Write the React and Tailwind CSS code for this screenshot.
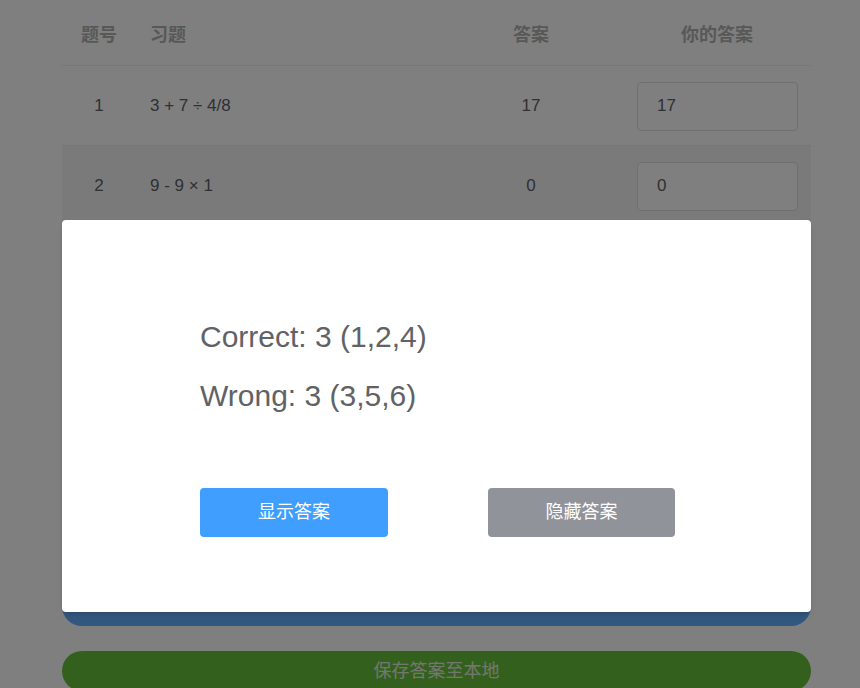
import React, { useState } from 'react';

const rows = [
  { id: 1, q: '3 + 7 ÷ 4/8', a: '17', mine: '17' },
  { id: 2, q: '9 - 9 × 1', a: '0', mine: '0' },
  { id: 3, q: '5 × 6 - 8', a: '22', mine: '20' },
  { id: 4, q: '12 ÷ 3 + 2', a: '6', mine: '6' },
  { id: 5, q: '7 + 8 × 2', a: '23', mine: '30' },
  { id: 6, q: '4 × 4 - 1', a: '15', mine: '14' },
];

const font = { fontFamily: '"Liberation Sans", Arial, "Noto Sans CJK SC", sans-serif' };

const App = () => {
  const [answers, setAnswers] = useState(rows.map((r) => r.mine));
  const [showModal, setShowModal] = useState(true);

  return (
    <div className="relative min-h-[688px] bg-white overflow-hidden" style={font}>
      <div className="ml-[62px] w-[749px]">
        <div className="grid grid-cols-[74px_303px_184px_188px] h-[66px] pt-[6px] items-center border-b border-[#ebeef5] text-[18px] font-bold text-[#b0b0b0]">
          <div className="text-center">题号</div>
          <div className="pl-[14px]">习题</div>
          <div className="text-center">答案</div>
          <div className="text-center">你的答案</div>
        </div>

        {rows.map((r, i) => (
          <div
            key={r.id}
            className={`grid grid-cols-[74px_303px_184px_188px] h-[80px] items-center border-b border-[#ebeef5] text-[17px] text-[#606266] ${i % 2 === 1 ? 'bg-[#f5f5f5]' : 'bg-white'}`}
          >
            <div className="text-center">{r.id}</div>
            <div className="pl-[14px]">{r.q}</div>
            <div className="text-center">{r.a}</div>
            <div className="pl-[14px] pr-[13px] pt-px">
              <input
                value={answers[i]}
                onChange={(e) => {
                  const next = [...answers];
                  next[i] = e.target.value;
                  setAnswers(next);
                }}
                className="w-full h-[49px] px-[19px] bg-white border border-[#dcdfe6] rounded text-[17px] text-[#606266] outline-none"
              />
            </div>
          </div>
        ))}

        <button className="mt-[20px] w-full h-[60px] rounded-[20px] bg-[#66b1ff] text-white text-[18px]">
          提交答案
        </button>
        <button className="mt-[25px] w-full h-[40px] rounded-full bg-[#67c23a] text-[#e6eee0] text-[18px]">
          保存答案至本地
        </button>
      </div>

      {showModal && (
        <>
          <div className="absolute inset-0 bg-black/50" onClick={() => setShowModal(false)} />
          <div className="absolute top-[220px] left-[62px] w-[749px] h-[392px] bg-white rounded-sm shadow-md pl-[138px] pt-[96px]">
            <div className="text-[30px] text-[#606266] leading-[42px]">Correct: 3 (1,2,4)</div>
            <div className="mt-[17px] text-[30px] text-[#606266] leading-[42px]">Wrong: 3 (3,5,6)</div>
            <div className="mt-[71px] flex gap-[100px]">
              <button className="w-[188px] h-[49px] rounded bg-[#409eff] text-white text-[18px]">
                显示答案
              </button>
              <button
                onClick={() => setShowModal(false)}
                className="w-[187px] h-[49px] rounded bg-[#909399] text-white text-[18px]"
              >
                隐藏答案
              </button>
            </div>
          </div>
        </>
      )}
    </div>
  );
};

export default App;
